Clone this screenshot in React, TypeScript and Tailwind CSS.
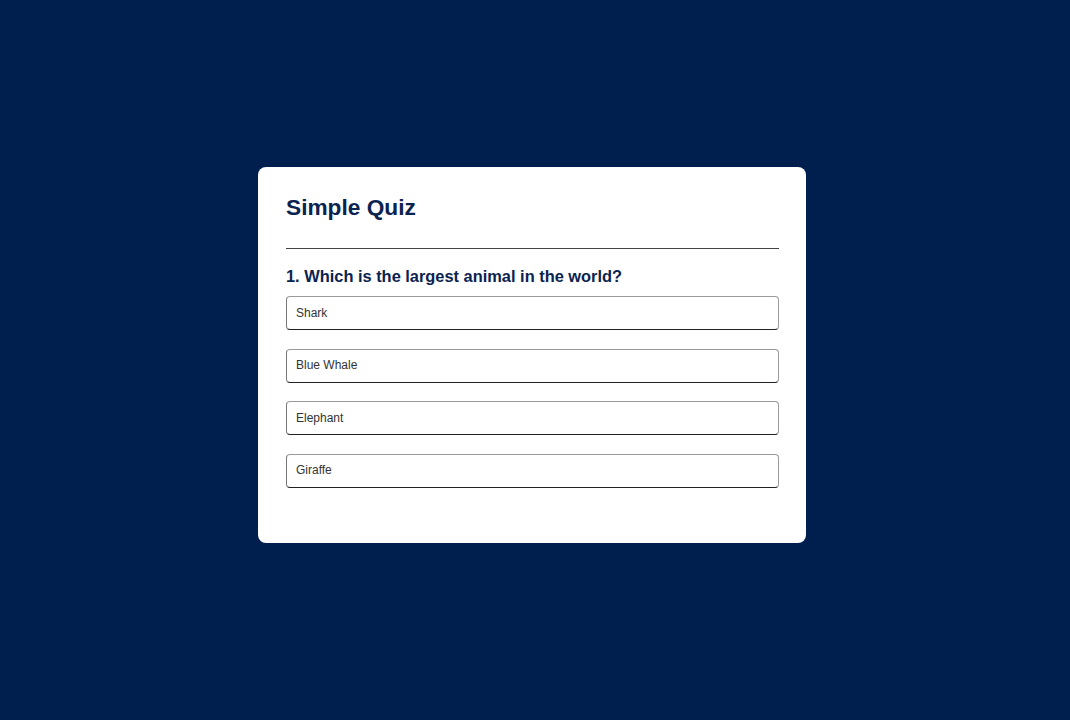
import React from 'react';

const options = ['Shark', 'Blue Whale', 'Elephant', 'Giraffe'];

export default function App() {
  return (
    <div
      className="min-h-screen bg-[#001f4f] flex items-center justify-center pb-[10px] pr-[6px]"
      style={{ fontFamily: '"Liberation Sans", Arial, sans-serif' }}
    >
      <div className="w-[548px] bg-white rounded-[8px] pl-[28px] pr-[27px] pt-[27px] pb-[55px]">
        <h1 className="text-[22.7px] leading-[26px] font-bold text-[#0b2350]">Simple Quiz</h1>
        <div className="mt-[28px] h-px bg-[#444]" />
        <h2 className="mt-[18px] text-[16.4px] leading-[19px] font-bold text-[#0b2350]">
          1. Which is the largest animal in the world?
        </h2>
        <div className="mt-[10px] flex flex-col gap-[18.5px]">
          {options.map((opt) => (
            <button
              key={opt}
              className="h-[34px] w-full text-left pl-[9px] pb-px text-[12px] text-[#333] bg-white rounded-[4px] border border-[#777] border-t-[#9a9a9a] border-r-[#9a9a9a] border-b-[#222]"
            >
              {opt}
            </button>
          ))}
        </div>
      </div>
    </div>
  );
}
